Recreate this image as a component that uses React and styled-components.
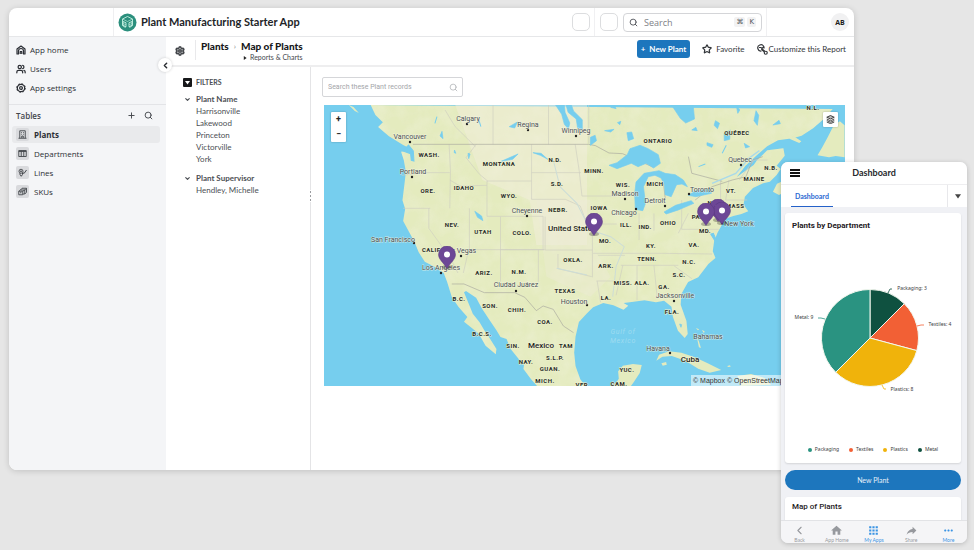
import React from "react";
import styled, { createGlobalStyle } from "styled-components";
import { ChevronLeft, ChevronDown, Plus, Search, Settings, Star, Users } from "lucide-react";
import { MdHome, MdApps, MdReply, MdMoreHoriz } from "react-icons/md";

const GlobalStyle = createGlobalStyle`
  *, *::before, *::after { box-sizing: border-box; }
  body { margin: 0; background: #e6e6e6; font-family: "Open Sans", "Noto Sans", sans-serif; color: #2b2e33; }
  button, input { font: inherit; color: inherit; }
  button { padding: 0; border: 0; background: none; cursor: pointer; }
  a { color: inherit; text-decoration: none; }
  h1, h2, p, ul { margin: 0; padding: 0; }
  ul { list-style: none; }
  svg { flex: none; }
`;

/* ---------- page frame ---------- */

const Page = styled.div`
  position: relative;
  min-height: 100vh;
  padding: 8px 120px 80px 9px;
`;

const AppWindow = styled.div`
  display: flex;
  flex-direction: column;
  min-height: 462px;
  overflow: hidden;
  border-radius: 8px;
  background: #fff;
  box-shadow: 0 1px 6px rgba(0, 0, 0, 0.16);
`;

const TopBar = styled.header`
  display: flex;
  align-items: center;
  height: 29px;
  padding-right: 5px;
  border-bottom: 1px solid #e6e7e9;
`;

const TopBarStart = styled.div`
  align-self: stretch;
  width: 105px;
  margin-right: 4px;
  border-right: 1px solid #efeff1;
`;

const AppTitle = styled.h1`
  flex: 1;
  margin-left: 4px;
  font: 700 11px/16px Lato, sans-serif;
  color: #222427;
  white-space: nowrap;
`;

const SquareButton = styled.button`
  width: 18px;
  height: 18px;
  border: 1px solid #dcdddf;
  border-radius: 5px;
`;

const BarDivider = styled.span`
  align-self: stretch;
  width: 1px;
  margin: 0 5px 0 4px;
  background: #f0f0f2;
`;

const GlobalSearch = styled.label`
  display: flex;
  align-items: center;
  width: 139px;
  height: 19px;
  margin-left: 5px;
  padding: 0 5px;
  gap: 6px;
  border: 1px solid #d4d5d8;
  border-radius: 4px;
  color: #55585e;

  input {
    flex: 1;
    min-width: 0;
    padding: 0;
    border: 0;
    outline: 0;
    background: none;
    font-size: 9px;
    &::placeholder { color: #7e8187; opacity: 1; }
  }
`;

const Key = styled.kbd`
  margin-left: -4px;
  padding: 0 2px;
  border-radius: 2px;
  background: #f2f2f3;
  font: 7px/10px "DejaVu Sans", sans-serif;
  color: #55585e;
`;

const Avatar = styled.button`
  width: 18px;
  height: 18px;
  margin-left: 59px;
  border-radius: 50%;
  background: #f1f1f2;
  font-size: 7px;
  font-weight: 700;
  color: #1c1d20;
`;

const Body = styled.div`
  display: flex;
  flex: 1;
`;

/* ---------- sidebar ---------- */

const Sidebar = styled.aside`
  position: relative;
  flex: none;
  width: 157px;
  background: #f4f5f7;
`;

const MainLinks = styled.nav`
  padding: 3px 7px 7px;
  border-bottom: 1px solid #e3e4e7;
`;

const MainLink = styled.a`
  display: flex;
  align-items: center;
  height: 19px;
  gap: 4px;
  font-size: 8px;
  color: #2c2f35;
`;

const CollapseButton = styled.button`
  position: absolute;
  top: 21px;
  right: -6px;
  z-index: 1;
  display: grid;
  place-items: center;
  width: 14px;
  height: 14px;
  border-radius: 50%;
  background: #fff;
  box-shadow: 0 0 3px rgba(0, 0, 0, 0.18);
`;

const TablesHeader = styled.div`
  display: flex;
  align-items: center;
  height: 21px;
  padding: 0 13px 0 7px;
  gap: 8px;
  color: #43464c;

  h2 { flex: 1; font-size: 8px; font-weight: 600; }
  button { display: grid; place-items: center; }
`;

const TableLink = styled.a`
  display: flex;
  align-items: center;
  height: 17px;
  margin: 0 6px 2px 3px;
  padding: 0 4px;
  gap: 5px;
  border-radius: 3px;
  background: ${(p) => (p.$active ? "#e9eaec" : "transparent")};
  font-size: 8px;
  font-weight: ${(p) => (p.$active ? 700 : 400)};
  color: #2c2f35;
`;

const TableIcon = styled.span`
  display: grid;
  place-items: center;
  width: 13px;
  height: 13px;
  border-radius: 2px;
  background: #d9dadd;
  color: #44474c;
`;

/* ---------- report area ---------- */

const Main = styled.main`
  display: flex;
  flex: 1;
  min-width: 0;
  flex-direction: column;
`;

const ReportHeader = styled.div`
  display: flex;
  height: 30px;
  padding: 3px 8px 0;
  border-bottom: 2px solid #eeeeef;
`;

const GearButton = styled.button`
  display: grid;
  place-items: center;
  width: 12px;
  height: 22px;
  margin-right: 9px;
`;

const Crumbs = styled.div`
  display: flex;
  flex: 1;
  gap: 5px;
  height: 20px;
  padding-left: 5px;
  border-left: 1px solid #e9e9eb;
  font: 900 10px/13px Lato, sans-serif;
  color: #17181a;
  white-space: nowrap;

  h2 { font: inherit; }
  > span { font-size: 8px; font-weight: 400; color: #888; }
`;

const ReportMenu = styled.button`
  display: flex;
  align-items: center;
  gap: 3px;
  height: 9px;
  padding-left: 2px;
  font-size: 7px;
  font-weight: 400;
  color: #45484d;
`;

const HeaderActions = styled.div`
  display: flex;
  gap: 12px;
  height: 20px;
`;

const PrimaryButton = styled.button`
  align-self: flex-start;
  height: 18px;
  padding: 0 4px;
  border-radius: 3px;
  background: #1d76bd;
  font: 700 8px/18px Lato, sans-serif;
  color: #fff;
`;

const TextButton = styled.button`
  display: flex;
  align-items: center;
  gap: ${(p) => (p.$tight ? "1px" : "4px")};
  height: 18px;
  font: 8px/18px Lato, sans-serif;
  color: #33363a;
  white-space: nowrap;
`;

const ReportBody = styled.div`
  display: flex;
  flex: 1;
`;

const Filters = styled.section`
  position: relative;
  flex: none;
  width: 145px;
  padding: 10px 16px 10px 17px;
  border-right: 1px solid #e4e4e6;
  font: 8px/12px Lato, sans-serif;
  color: #4c4f54;
`;

const FiltersTitle = styled.h2`
  display: flex;
  align-items: center;
  gap: 4px;
  margin-bottom: 5px;
  font: 700 7px/11px Lato, sans-serif;
`;

const FilterBadge = styled.span`
  display: grid;
  place-items: center;
  width: 9px;
  height: 9px;
  border-radius: 1px;
  background: #17181a;
`;

const FilterGroup = styled.div`
  margin-bottom: 7px;
  ul { padding-left: 13px; }
  li button { display: block; }
`;

const FilterToggle = styled.button`
  display: flex;
  align-items: center;
  gap: 5px;
  padding-left: 1px;
  font-weight: 700;
`;

const ResizeHandle = styled.span`
  position: absolute;
  top: 123px;
  right: -2px;
  width: 3px;
  height: 12px;
  background: radial-gradient(circle, #9b9ca0 0.5px, #fff 1px) 0 0 / 3px 4px;
`;

const Content = styled.section`
  flex: 1;
  min-width: 0;
  padding: 10px 9px 10px 11px;
`;

const RecordSearch = styled.label`
  display: flex;
  align-items: center;
  width: 141px;
  height: 20px;
  margin-bottom: 8px;
  padding: 0 4px 0 5px;
  border: 1px solid #d5d6d9;
  border-radius: 2px;
  color: #aeb0b4;

  input {
    flex: 1;
    min-width: 0;
    padding: 0;
    border: 0;
    outline: 0;
    background: none;
    font: 7px/12px Roboto, sans-serif;
    &::placeholder { color: #a3a5a9; opacity: 1; }
  }
`;

/* ---------- map ---------- */

const MapFrame = styled.div`
  position: relative;
  margin-left: 2px;
  overflow: hidden;
  > svg { display: block; width: 100%; height: auto; }
`;

const StateText = styled.text`
  font: 700 6px Roboto, sans-serif;
  letter-spacing: 0.08em;
  text-anchor: middle;
  dominant-baseline: central;
  fill: #292c28;
  stroke: #eef2cf;
  stroke-width: 1px;
  paint-order: stroke;
`;

const CityText = styled.text`
  font: 7px Roboto, sans-serif;
  text-anchor: middle;
  dominant-baseline: central;
  fill: #4b5054;
  stroke: rgba(245, 247, 230, 0.7);
  stroke-width: 1px;
  paint-order: stroke;
`;

const CountryText = styled.text`
  font: 500 8px Roboto, sans-serif;
  text-anchor: middle;
  dominant-baseline: central;
  fill: #1f2222;
  stroke: #eef2d5;
  stroke-width: 1px;
  paint-order: stroke;
`;

const WaterText = styled.text`
  font: italic 7px Roboto, sans-serif;
  letter-spacing: 0.1em;
  text-anchor: middle;
  dominant-baseline: central;
  fill: #9edcf0;
`;

const MapControls = styled.div`
  position: absolute;
  top: 7px;
  ${(p) => (p.$right ? "right: 7px;" : "left: 7px;")}
  display: grid;
  border-radius: 1px;
  background: #fff;
  box-shadow: 0 0 2px rgba(0, 0, 0, 0.3);

  button {
    display: grid;
    place-items: center;
    width: 15px;
    height: 15px;
    font: 700 9px/15px Roboto, sans-serif;
    color: #222;
  }
`;

const Attribution = styled.p`
  position: absolute;
  right: 0;
  bottom: 0;
  display: flex;
  gap: 2px;
  width: 154px;
  height: 11px;
  overflow: hidden;
  padding: 0 2px;
  background: rgba(255, 255, 255, 0.55);
  font: 7px/11px "Liberation Sans", sans-serif;
  color: #333;
  white-space: nowrap;
`;

/* ---------- phone ---------- */

const Phone = styled.section`
  position: absolute;
  top: 162px;
  right: 7px;
  display: flex;
  flex-direction: column;
  width: 186px;
  height: 381px;
  overflow: hidden;
  border-radius: 7px;
  background: #f0f1f5;
  box-shadow: 0 1px 5px rgba(0, 0, 0, 0.2);
`;

const PhoneHeader = styled.header`
  display: grid;
  grid-template-columns: 12px 1fr 12px;
  align-items: center;
  height: 23px;
  padding: 0 9px;
  border-bottom: 1px solid #eeeef0;
  background: #fff;

  button { display: grid; }
  h2 { text-align: center; font: 700 9px/12px Lato, sans-serif; color: #26282b; }
`;

const PhoneTabs = styled.nav`
  display: flex;
  justify-content: space-between;
  height: 22px;
  padding-left: 10px;
  background: #fff;
`;

const PhoneTab = styled.a`
  height: 22px;
  padding: 0 4px;
  border-bottom: 1px solid #2461c9;
  font: 700 7px/22px Lato, sans-serif;
  color: #2b68d2;
`;

const TabMenu = styled.button`
  display: grid;
  place-items: center;
  width: 20px;
  border-left: 1px solid #e8e8eb;
`;

const PhoneContent = styled.div`
  display: flex;
  flex: 1;
  min-height: 0;
  flex-direction: column;
  gap: 7px;
  overflow: hidden;
  padding: 6px 6px 0 4px;
`;

const PhoneCard = styled.article`
  flex: none;
  display: flex;
  flex-direction: column;
  height: ${(p) => (p.$tall ? "250px" : "30px")};
  border-radius: 3px;
  background: #fff;
  box-shadow: 0 1px 2px rgba(0, 0, 0, 0.12);

  h2 { padding: 7px 7px 0; font: 700 8px/12px ${(p) => (p.$tall ? "Roboto" : "Lato")}, sans-serif; color: #1e2023; }
  > svg { display: block; width: 100%; height: auto; }
`;

const PlainTitle = styled.h2`
  && { padding-top: 4px; font: 500 8px/12px Roboto, sans-serif; }
`;

const ChartText = styled.text`
  font: 5px "Noto Sans", sans-serif;
  fill: #3a3c40;
  text-anchor: middle;
  dominant-baseline: central;
`;

const Legend = styled.ul`
  display: flex;
  justify-content: center;
  gap: 10px;
  margin-top: auto;
  padding: 0 0 10px;
  font: 5px/7px "Noto Sans", sans-serif;
  color: #3a3c40;

  li { display: flex; align-items: center; gap: 3px; }
`;

const Dot = styled.span`
  width: 4px;
  height: 4px;
  border-radius: 50%;
  background: ${(p) => p.$color};
`;

const PillButton = styled.button`
  flex: none;
  height: 20px;
  border-radius: 10px;
  background: #1d76bd;
  font: 7px/20px Lato, sans-serif;
  color: #e4f0fa;
`;

const PhoneNav = styled.nav`
  display: grid;
  grid-template-columns: repeat(5, 1fr);
  height: 23px;
  padding-top: 3px;
  border-top: 1px solid #e2e3e6;
  background: #f5f5f7;
`;

const PhoneNavItem = styled.a`
  display: flex;
  flex-direction: column;
  align-items: center;
  font: 5px/6px Lato, sans-serif;
  color: ${(p) => (p.$active ? "#3b94e4" : "#97999e")};
`;

const ShareIcon = styled(MdReply)`
  transform: scaleX(-1);
`;

/* ---------- drawings ---------- */

const AppLogo = () => (
  <svg width="19" height="19" viewBox="0 0 38 38" aria-hidden="true">
    <circle cx="19" cy="19" r="18" fill="#2b8f7d" />
    <g fill="none" stroke="#c6f0e2" strokeWidth="1.8" strokeLinejoin="round">
      <path d="M19 7l10 5v13l-6 4M19 7L9 12v13l6 4" />
      <path d="M9 12l10 5 10-5" strokeWidth="1.2" />
      <path d="M10 17l6 2.500v8l-6-3zM28 17l-6 2.500v8l6-3z" />
      <path d="M10 21l6 2.500M28 21l-6 2.500" strokeWidth="1.2" />
    </g>
  </svg>
);

const HomeIcon = () => (
  <svg width="10" height="10" viewBox="0 0 20 20" fill="none" stroke="currentColor" strokeWidth="2.400" strokeLinejoin="round" aria-hidden="true">
    <path d="M2 18V8l8-6 8 6v10h-3v-6a5 5 0 0 0-10 0v6zM8.500 18v-5h3v5" />
  </svg>
);

const GearRoundIcon = () => (
  <svg width="10" height="10" viewBox="0 0 20 20" fill="none" stroke="currentColor" aria-hidden="true">
    <circle cx="10" cy="10" r="7.4" strokeWidth="2.600" />
    <circle cx="10" cy="10" r="8.8" strokeWidth="1.6" strokeDasharray="3.4 3.5" />
    <circle cx="10" cy="10" r="2.8" strokeWidth="2.4" />
  </svg>
);

const SmallIcon = ({ children }) => (
  <svg width="9" height="9" viewBox="0 0 18 18" fill="none" stroke="currentColor" strokeWidth="1.800" strokeLinejoin="round" aria-hidden="true">
    {children}
  </svg>
);

const BuildingIcon = () => (
  <SmallIcon><path d="M3.500 16.500v-15h11v15M1 16.500h16M6.500 5h1.500M10 5h1.500M6.500 8.500h1.500M10 8.500h1.500M7.500 16v-4h3v4" /></SmallIcon>
);

const ColumnsIcon = () => (
  <SmallIcon><path d="M1.500 3h15v12h-15zM6.500 3v12M11.500 3v12M1.500 5h15" /></SmallIcon>
);

const LineIcon = () => (
  <SmallIcon>
    <circle cx="6" cy="6.500" r="4" />
    <circle cx="6" cy="6.500" r="1" fill="currentColor" />
    <path d="M4 10v3l2.500 3.500L9 13v-3M9.500 9l2.500 2 5-7" strokeWidth="2" />
  </SmallIcon>
);

const BoxesIcon = () => (
  <SmallIcon><path d="M5 6l3-3.500h9v8L13.500 14M17 2.500L13.500 6M1.500 8.500h8v7h-8zM5 6h8.500v8H9.500M1.500 8.500L5 6M9.500 8.500l4-2.500M4 11.500h3" /></SmallIcon>
);

const LayersIcon = () => (
  <svg width="9" height="9" viewBox="0 0 18 18" fill="none" stroke="#333" strokeWidth="1.800" strokeLinejoin="round" aria-hidden="true">
    <path d="M9 1l7.500 3.500L9 8 1.500 4.500z" fill="#333" fillOpacity=".35" />
    <path d="M1.500 8L9 11.500 16.500 8M1.500 11L9 14.500l7.500-3.500M1.500 14L9 17.200l7.500-3.200" />
  </svg>
);

const CustomizeIcon = () => (
  <svg width="11" height="11" viewBox="0 0 22 22" fill="none" stroke="currentColor" strokeWidth="2.400" aria-hidden="true">
    <path d="M13.500 5A6.300 6.300 0 1 0 9 14M4 7h4l2 2 4-4M14 5v4" />
    <circle cx="17.500" cy="17.500" r="3" />
    <path d="M9 10l6 5" strokeWidth="4" />
  </svg>
);

const MenuIcon = () => (
  <svg width="10" height="8" viewBox="0 0 10 8" fill="#111" aria-hidden="true">
    <path d="M0 0h10v2H0zM0 3h10v2H0zM0 6h10v2H0z" />
  </svg>
);

const Triangle = ({ size = 5, color = "#222", right = false }) => (
  <svg width={size} height={size} viewBox="0 0 10 10" fill={color} aria-hidden="true">
    <path d={right ? "M2 0l7 5-7 5z" : "M0 2h10L5 9z"} />
  </svg>
);

const STATES = [
  ["WASH.", 105, 49], ["ONTARIO", 334, 35], ["QUÉBEC", 413, 27], ["N.L.", 489, 2], ["MONTANA", 175, 58],
  ["N.D.", 231, 54], ["MINN.", 270, 65], ["WIS.", 299, 79], ["MICH", 331, 78], ["N.B.", 447, 62],
  ["MAINE", 430, 73], ["VT.", 407, 85], ["ORE.", 104, 85], ["IDAHO", 140, 82], ["WYO.", 185, 90],
  ["S.D.", 233, 78], ["IOWA", 275, 102], ["NEBR.", 234, 104], ["NEV.", 128, 119], ["UTAH", 159, 126],
  ["COLO.", 198, 127], ["MO.", 281, 135], ["ILL.", 302, 119], ["IND.", 321, 121], ["OHIO", 344, 117],
  ["PA.", 373, 111], ["N.", 387, 97], ["MASS", 411, 100], ["MD.", 381, 125], ["KY.", 327, 140],
  ["VA.", 370, 139], ["TENN.", 323, 153], ["N.C.", 365, 156], ["S.C.", 355, 169], ["ARK.", 282, 160],
  ["OKLA.", 249, 154], ["MISS.", 299, 177], ["ALA.", 318, 177], ["GA.", 340, 181], ["N.M.", 195, 166],
  ["ARIZ.", 160, 167], ["CALIF.", 108, 144], ["TEXAS", 241, 185], ["LA.", 282, 192], ["FLA.", 348, 206],
  ["B.C.", 135, 193], ["SON.", 166, 200], ["CHIH.", 193, 204], ["COA.", 221, 216], ["B.C.S.", 158, 228],
  ["SIN.", 189, 240], ["TAM", 242, 240], ["NAY.", 202, 256], ["S.L.P.", 231, 252], ["GUAN.", 226, 263],
  ["MICH.", 221, 275], ["VER.", 259, 279], ["YUC.", 303, 264], ["CAM.", 295, 278],
];

/* name, label centre, city dot */
const CITIES = [
  ["Calgary", 144, 14, 143, 19], ["Regina", 204, 20, 204, 25], ["Winnipeg", 252, 26, 252, 31],
  ["Vancouver", 86, 32, 86, 37], ["Quebec", 416, 55, 417, 60], ["Toronto", 378, 85, 365, 89],
  ["Portland", 89, 67, 88, 72], ["Madison", 301, 89, 301, 94], ["Detroit", 331, 96, 341, 101],
  ["Chicago", 300, 108, 312, 104], ["Cheyenne", 203, 106, 203, 111], ["New York", 415, 119, 398, 118],
  ["Las Vegas", 136, 146, 137, 151], ["San Francisco", 69, 135, 90, 138], ["Los Angeles", 117, 163, 117, 168],
  ["Ciudad Juárez", 192, 180, 192, 186], ["Houston", 250, 197, 263, 200], ["Jacksonville", 351, 191, 350, 196],
  ["Bahamas", 384, 232], ["Havana", 334, 244, 346, 248],
];

const PINS = [[123, 149], [270, 116], [394, 102], [398, 105], [382, 106]];

const LAND = [
  /* mainland */
  "M150 15l14 30 22 22-14 14 32 28 42 26 28 14-34 6 8 26 6 34-4 36-6 50 8 26-6 36 18 34 16 30 12 30 18 28 30 16 26 18 10 26 14 46 20 30 26 30-10 14 24 20 20 16 20 36 30 26 2-16-20-32-16-24-14-24-20-26-12-30-14-34 6-4 30 20 18 34 22 34 20 30 12 20 18 6 12 30 24 30 16 14-2 16 22 30 20 23h142l-16-22-14-40-4-40 4-48 10-44 24-26 18-18 30-13 30 7 30 13 14-12-14-8 30-4 32-4 34 6 24-5 22 18 4 30 15 42 20 22 9-12-4-40-17-48 2-32 20-36 30-14 30-40 21-18-8-20 4-30 10-26 14-25 5-15 28-10 24-6 20-8-14-20 4-24 24-26 30-14 20-5 20-20 12-18-12-10 24-30-4-22-48 6-30 30-10 14-50 36 26-34 30-28 34-30 32-18 44-6 26-8 34-22 34-30 24-28z",
  /* Nova Scotia */
  "M1340 275l12-24 26-12 20 10-10 20-30 16z",
  /* Anticosti and Newfoundland */
  "M1382 106l22 4 20 14-6 5-26-11zM1472 166l14-24 16-30 18-36 18-12 14 12v96l-26-4-20 4z",
  /* Yucatán */
  "M870 858l14-22-2-22 14-17 30-5 26 3-6 24-18 28-8 11z",
  /* Cuba, Hispaniola, Bahamas */
  "M995 782l8-18 30-10 36 4 40 14 38 18 40 20-34 8-34-12-38-24-40-14-28 2zM1010 790l14-4 2 8-12 3zM1235 828l40-6 40 12 20 20-90 4zM1115 712l6 12 6 20-6-2zM1130 690l8 4-2 6z",
  "M85 15l14 6 16 18-12-6zM1112 684l10 4-4 3zM1205 798l8-2 2 4-8 1z",
];

const LAKES = [
  "M855 196l24-8 30-24 8-18 30-10 24 10 30 18 6 26-20 14-22-14-24 10-20-10-42 16z",
  "M935 246l24-26 44-8 18 8 30 4 24 16 12 20-16-8-16 2-16 36-18-6-2-30-10-20-18-8-20 4-14 30 6 50-8 22-22-4-2-46z",
  "M1018 336l34-20 46-14 8 8-46 20-36 12zM1090 286l20-14 46-4 2 12-46 10z",
  "M697 15l18 28 8 30 12 14 4-18-14-32-2-22zM728 15l6 22 24 20 4 26 14 6v-30l-26-26-6-18z",
  "M1040 15l26 40 16 14 26-12-4-42zM800 112l14-6 4 16-18 14zM908 98l14-2 6 20-16 6zM458 334l20 14 4 14-16-10z",
  "M630 158l24 2 20 18-22-12zM536 184l50-22-16 16zM560 80l24-14-8 18zM1196 100l18-10-2 28-16 4zM1290 32l8 14-4 30-10-14z",
  "M1170 62l12 8-6 16-10-10zM1232 18l10 12-6 10zM1145 128l18 6-4 8-14-6zM842 92l28-4-10 8zM355 108l6-14 3 22zM880 68l10-4-3 10z",
  "M398 150l4 10-5-2zM438 160l6 2-4 14zM1064 672l6 2-2 8zM1255 130l16 10-12 4zM1100 90l12-8 4 10zM1340 75l18-14 4 10zM860 22l12-4 4 8z",
];

const BORDERS = [
  "M512 15v118M676 15v118M795 15v115M382 133l4 80-2 112M246 325h80M322 325v60l64 90M242 226l60-8 82 0M442 325v124M534 350v195M494 243v106h166v100M384 240l30 18 80-2M494 243h132M626 133v165M626 218h146M626 298h100l44 20M664 449H440M646 449v98M666 350v100h140M534 449h130M755 133l12 80 8 75h100M770 318l20 54h88M806 372v160M704 462v44l100 24M822 466h80M818 543h60M808 460h92M440 449l-16 70M386 475l22 44M900 460h110l150 2M890 496h170M988 340v52M944 340v80M1070 300v88h110M1090 340l-30 60M938 496v104M988 496l10 100M896 496l-20 90M820 543l10 64M1048 498l52 38M1185 240v60M1210 240l-10 60h64M1240 240l44-60h40M462 133l-30 40 40 50 24 20M370 30l30 50 60 60",
];

const MapDrawing = () => (
  <svg viewBox="0 0 521 281" role="img" aria-label="Map of plants in North America">
    <defs>
      <filter id="terrain" x="0" y="0" width="1" height="1">
        <feTurbulence type="fractalNoise" baseFrequency="0.02" numOctaves="3" seed="4" />
        <feColorMatrix values="0 0 0 0 0.95  0 0 0 0 0.93  0 0 0 0 0.87  1.6 0 0 0 -0.55" />
        <feComposite in2="SourceGraphic" operator="in" />
      </filter>
      <symbol id="pin" viewBox="0 0 18 24">
        <ellipse cx="9" cy="21" rx="5" ry="2" fill="#000" opacity="0.25" />
        <path d="M9 0a8.5 8.5 0 0 1 8.5 8.5c0 5-5 8-8.5 14C5.500 16.500.5 13.500.5 8.500A8.500 8.500 0 0 1 9 0z" fill="#6d4796" stroke="#58387e" strokeWidth=".5" />
        <circle cx="9" cy="8.500" r="3" fill="#fff" />
      </symbol>
    </defs>
    <rect width="521" height="281" fill="#76ceee" />
    <g transform="translate(-4 -5) scale(.338 .3333)">
      <g fill="#e4ebbe">{LAND.map((d) => <path key={d} d={d} />)}</g>
      <path d={LAND[0]} filter="url(#terrain)" opacity="0.3" />
      <path d="M400 15h390v420H640L620 300 480 240z" fill="#f1eddb" opacity="0.5" />
      <path d="M640 300h160v130l60 100-60 60-130-60z" fill="#efebd9" opacity="0.35" />
      <g fill="none" stroke="#cfcfc0" strokeWidth="2">{BORDERS.map((d) => <path key={d} d={d} />)}</g>
      <path d="M275 133h520l20 4 40 22 40 2 90 40M1022 300l-8-70M1110 300l50-40 60-20 40-10 20-50 30-10M390 552h36l60 26h90l30 14 34 40 20-14 30 10 30 50 30 20M1090 170l10 50 90 24" fill="none" stroke="#aaa99f" strokeWidth="2" />
      <path d="M690 180l20 80 50 50 40 80 60 20 40 30-24 60-10 90M700 505l90 20" fill="none" stroke="#cdddd6" strokeWidth="3" />
      <path d="M1160 250l70-30 40-46 30-22" fill="none" stroke="#a9daea" strokeWidth="4" />
      <path d="M262 135l14 18 2 30-8-2-2-20-22-8zM1164 400l10 24-6-2-12-20zM340 70l6-20M1120 200l20-8M1190 160l12-24M470 60l6 20" fill="#76ceee" stroke="#76ceee" strokeWidth="3" />
      <g fill="#76ceee" stroke="#76ceee" strokeWidth="2" strokeLinejoin="round">{LAKES.map((d) => <path key={d} d={d} />)}</g>
    </g>
    {STATES.map(([name, x, y]) => <StateText key={`${name}${x}`} x={x} y={y}>{name}</StateText>)}
    {CITIES.map(([name, x, y, dx, dy]) => (
      <g key={name}>
        {dx && <circle cx={dx} cy={dy} r="1.200" fill="#222" />}
        <CityText x={x} y={y}>{name}</CityText>
      </g>
    ))}
    <CountryText x="248" y="123">United States</CountryText>
    <CountryText x="217" y="240">Mexico</CountryText>
    <CountryText x="366" y="254">Cuba</CountryText>
    <WaterText x="299" y="227">Gulf of</WaterText>
    <WaterText x="299" y="236">Mexico</WaterText>
    {PINS.map(([x, y]) => <use key={x} href="#pin" x={x - 9} y={y - 8} width="18" height="24" />)}
  </svg>
);

const PieChart = () => (
  <svg viewBox="0 0 176 190" role="img" aria-label="Plants by department">
    <g stroke="#f3f7ee" strokeWidth="1" strokeLinejoin="round">
      <path d="M85 106V57.500A48.500 48.500 0 0 1 119.300 71.700z" fill="#0f5140" />
      <path d="M85 106L119.300 71.700A48.500 48.500 0 0 1 131.800 118.600z" fill="#f26035" />
      <path d="M85 106L131.800 118.600A48.500 48.500 0 0 1 50.700 140.300z" fill="#f0b30b" />
      <path d="M85 106L50.700 140.300A48.500 48.500 0 0 1 85 57.500z" fill="#2a9381" />
    </g>
    <g fill="none" strokeWidth="0.8">
      <path d="M103 61l2-4h2" stroke="#0f5140" />
      <path d="M132 94l4-1h3" stroke="#f26035" />
      <path d="M97 153l2 4h2" stroke="#f0b30b" />
      <path d="M40 87l-4-1h-3" stroke="#2a9381" />
    </g>
    <ChartText x="127" y="56">Packaging: 3</ChartText>
    <ChartText x="155" y="92">Textiles: 4</ChartText>
    <ChartText x="117" y="157">Plastics: 8</ChartText>
    <ChartText x="19" y="85">Metal: 9</ChartText>
  </svg>
);

/* ---------- data ---------- */

const TABLES = [
  { name: "Plants", icon: BuildingIcon, active: true },
  { name: "Departments", icon: ColumnsIcon },
  { name: "Lines", icon: LineIcon },
  { name: "SKUs", icon: BoxesIcon },
];

const FILTERS = [
  { name: "Plant Name", values: ["Harrisonville", "Lakewood", "Princeton", "Victorville", "York"] },
  { name: "Plant Supervisor", values: ["Hendley, Michelle"] },
];

const LEGEND = [
  ["Packaging", "#2a9381"], ["Textiles", "#f26035"], ["Plastics", "#f0b30b"], ["Metal", "#0f5140"],
];

export default function App() {
  return (
    <>
      <GlobalStyle />
      <Page>
        <AppWindow>
          <TopBar>
            <TopBarStart />
            <AppLogo />
            <AppTitle>Plant Manufacturing Starter App</AppTitle>
            <SquareButton type="button" aria-label="Notifications" />
            <BarDivider />
            <SquareButton type="button" aria-label="Help" />
            <GlobalSearch>
              <Search size={9} strokeWidth={2.5} aria-hidden="true" />
              <input type="text" aria-label="Search" placeholder="Search" />
              <Key>⌘</Key>
              <Key>K</Key>
            </GlobalSearch>
            <BarDivider />
            <Avatar type="button" aria-label="Account AB">AB</Avatar>
          </TopBar>

          <Body>
            <Sidebar>
              <MainLinks aria-label="App">
                <MainLink href="#home"><HomeIcon />App home</MainLink>
                <MainLink href="#users"><Users size={10} strokeWidth={3} aria-hidden="true" />Users</MainLink>
                <MainLink href="#settings"><GearRoundIcon />App settings</MainLink>
              </MainLinks>
              <CollapseButton type="button" aria-label="Collapse sidebar">
                <ChevronLeft size={9} strokeWidth={4} />
              </CollapseButton>
              <TablesHeader>
                <h2>Tables</h2>
                <button type="button" aria-label="Add table"><Plus size={9} strokeWidth={2.5} /></button>
                <button type="button" aria-label="Search tables"><Search size={9} strokeWidth={2.5} /></button>
              </TablesHeader>
              <nav aria-label="Tables">
                {TABLES.map(({ name, icon: Icon, active }) => (
                  <TableLink key={name} href={`#${name}`} $active={active}>
                    <TableIcon><Icon /></TableIcon>
                    {name}
                  </TableLink>
                ))}
              </nav>
            </Sidebar>

            <Main>
              <ReportHeader>
                <GearButton type="button" aria-label="Table settings"><Settings size={10} strokeWidth={4} color="#44474b" /></GearButton>
                <Crumbs>
                  <a href="#plants">Plants</a>
                  <span>›</span>
                  <div>
                    <h2>Map of Plants</h2>
                    <ReportMenu type="button"><Triangle right size={4} />Reports &amp; Charts</ReportMenu>
                  </div>
                </Crumbs>
                <HeaderActions>
                  <PrimaryButton type="button">+ &nbsp;New Plant</PrimaryButton>
                  <TextButton type="button"><Star size={10} strokeWidth={3} />Favorite</TextButton>
                  <TextButton type="button" $tight><CustomizeIcon />Customize this Report</TextButton>
                </HeaderActions>
              </ReportHeader>

              <ReportBody>
                <Filters>
                  <FiltersTitle>
                    <FilterBadge><Triangle color="#fff" /></FilterBadge>
                    FILTERS
                  </FiltersTitle>
                  {FILTERS.map((group) => (
                    <FilterGroup key={group.name}>
                      <FilterToggle type="button"><ChevronDown size={7} strokeWidth={4} />{group.name}</FilterToggle>
                      <ul>
                        {group.values.map((v) => <li key={v}><button type="button">{v}</button></li>)}
                      </ul>
                    </FilterGroup>
                  ))}
                  <ResizeHandle />
                </Filters>
                <Content>
                  <RecordSearch>
                    <input type="text" aria-label="Search these Plant records" placeholder="Search these Plant records" />
                    <Search size={9} aria-hidden="true" />
                  </RecordSearch>
                  <MapFrame>
                    <MapDrawing />
                    <MapControls>
                      <button type="button" aria-label="Zoom in">+</button>
                      <button type="button" aria-label="Zoom out">−</button>
                    </MapControls>
                    <MapControls $right>
                      <button type="button" aria-label="Layers"><LayersIcon /></button>
                    </MapControls>
                    <Attribution>
                      <a href="#mapbox">© Mapbox</a>
                      <a href="#osm">© OpenStreetMap</a>
                    </Attribution>
                  </MapFrame>
                </Content>
              </ReportBody>
            </Main>
          </Body>
        </AppWindow>

        <Phone>
          <PhoneHeader>
            <button type="button" aria-label="Menu"><MenuIcon /></button>
            <h2>Dashboard</h2>
          </PhoneHeader>
          <PhoneTabs>
            <PhoneTab href="#dashboard">Dashboard</PhoneTab>
            <TabMenu type="button" aria-label="More dashboards"><Triangle size={6} color="#444" /></TabMenu>
          </PhoneTabs>
          <PhoneContent>
            <PhoneCard $tall>
              <h2>Plants by Department</h2>
              <PieChart />
              <Legend>
                {LEGEND.map(([name, color]) => <li key={name}><Dot $color={color} />{name}</li>)}
              </Legend>
            </PhoneCard>
            <PillButton type="button">New Plant</PillButton>
            <PhoneCard><PlainTitle>Map of Plants</PlainTitle></PhoneCard>
          </PhoneContent>
          <PhoneNav>
            <PhoneNavItem href="#back"><ChevronLeft size={13} />Back</PhoneNavItem>
            <PhoneNavItem href="#home"><MdHome size={13} />App Home</PhoneNavItem>
            <PhoneNavItem href="#apps" $active><MdApps size={13} />My Apps</PhoneNavItem>
            <PhoneNavItem href="#share"><ShareIcon size={13} />Share</PhoneNavItem>
            <PhoneNavItem href="#more" $active><MdMoreHoriz size={13} />More</PhoneNavItem>
          </PhoneNav>
        </Phone>
      </Page>
    </>
  );
}
